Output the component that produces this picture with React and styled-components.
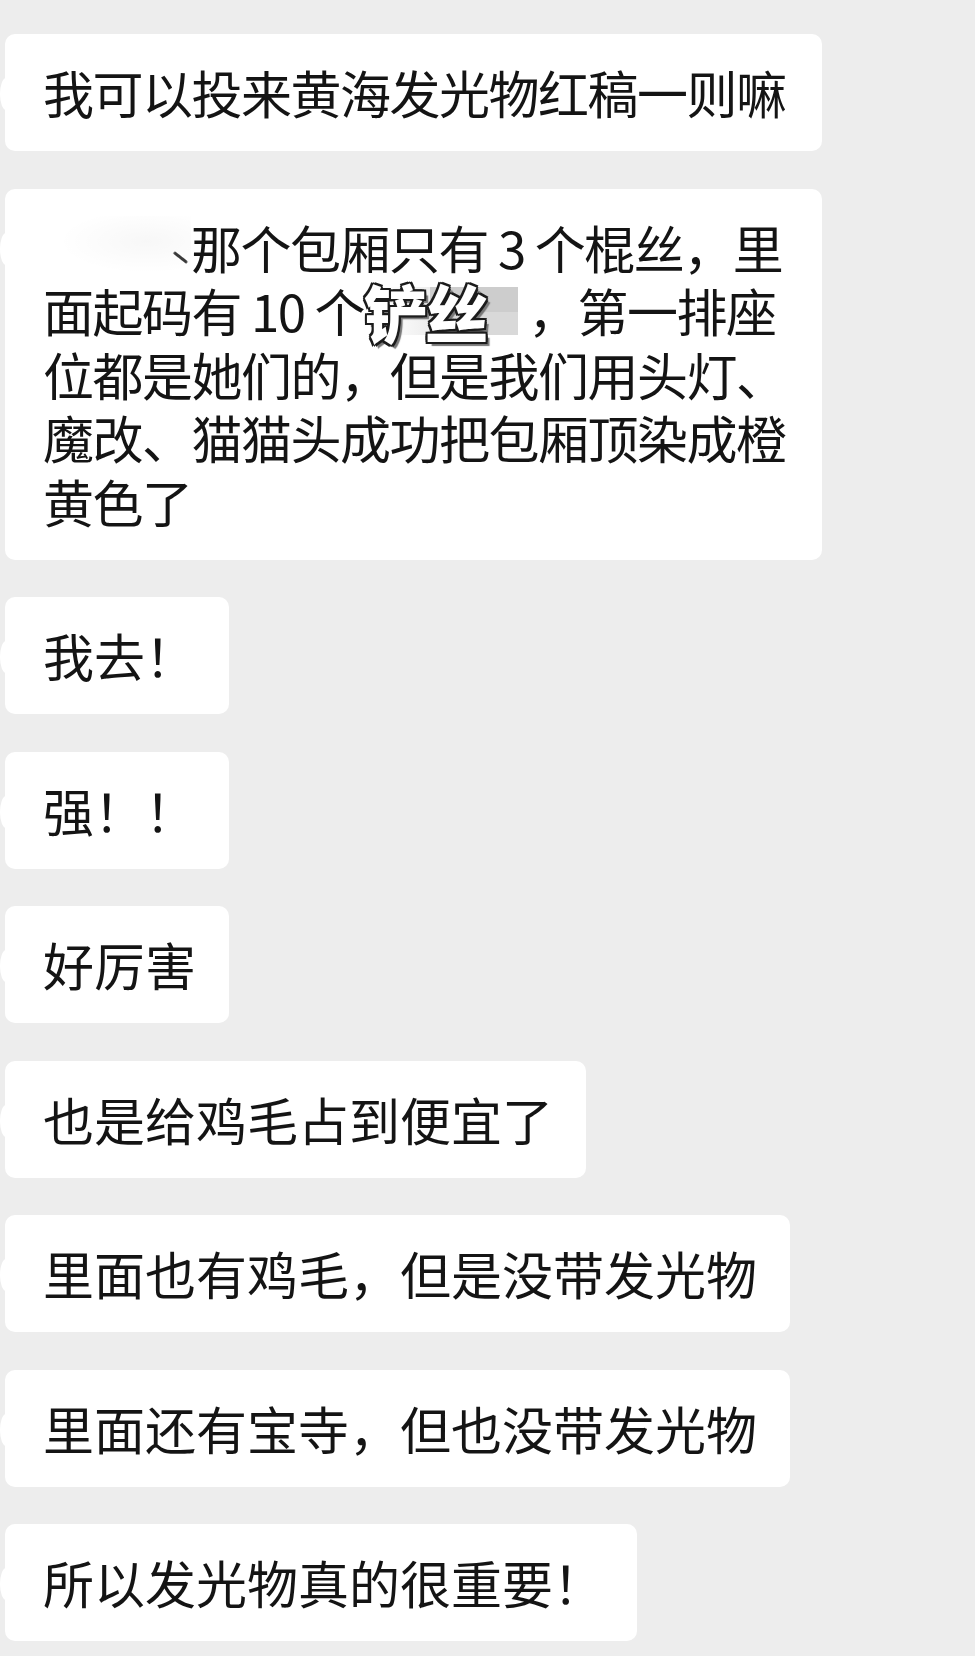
import React from "react";
import styled, { createGlobalStyle } from "styled-components";

const GlobalStyle = createGlobalStyle`
  html, body {
    margin: 0;
    padding: 0;
    background: #ededed;
  }
`;

const ChatWrapper = styled.div`
  width: 975px;
  min-height: 1656px;
  box-sizing: border-box;
  padding: 34px 0 0 5px;
  background: #ededed;

  display: flex;
  flex-direction: column;
  align-items: flex-start;
  gap: 37.5px;
`;

const Bubble = styled.div`
  position: relative;
  box-sizing: border-box;
  width: ${(p) => (p.$wide ? "817px" : "auto")};
  padding: 27px 33px 26.5px 38px;
  background: #fff;
  border-radius: 10px;

  font-family: "Noto Sans CJK SC", "Noto Sans", sans-serif;
  font-size: 51px;
  line-height: 63.5px;
  letter-spacing: ${(p) => (p.$wide ? "-1.5px" : "0")};
  color: #141414;
  white-space: nowrap;

  &::before {
    content: "";
    position: absolute;
    left: -5px;
    top: 44px;
    width: 12px;
    height: 32px;
    border-radius: 50%;
    background: #fff;
  }
`;

const Line = styled.div`
  display: block;
  height: 63.5px;
`;

/* blurred-out name at the start of the long message */
const Redacted = styled.span`
  position: relative;
  display: inline-block;
  width: 148px;
  height: 63.5px;
  vertical-align: top;
  background: radial-gradient(ellipse at 70% 40%, rgba(0, 0, 0, 0.03), rgba(0, 0, 0, 0) 60%);

  &::after {
    content: "";
    position: absolute;
    left: 129px;
    top: 40px;
    width: 17px;
    height: 3px;
    border-radius: 2px;
    background: #3a3a3a;
    transform: rotate(38deg);
    filter: blur(0.4px);
  }
`;

const Sticker = styled.span`
  display: inline-flex;
  align-items: center;
  width: 164px;
  height: 63.5px;
  vertical-align: top;
  background:
    linear-gradient(180deg, #cdcdcd 0 52%, #d9d9d9 52% 100%) right 10px center / 88px 48px no-repeat,
    linear-gradient(90deg, rgba(230, 230, 230, 0) 0, #e6e6e6 100%) left 20px center / 66px 48px no-repeat;
`;

const StickerText = styled.span`
  font-family: "Noto Sans CJK SC", sans-serif;
  font-size: 63px;
  font-weight: 900;
  line-height: 63.5px;
  letter-spacing: -2px;
  color: #fff;
  text-shadow:
    -2px 0 #1c1c1c, 2px 0 #1c1c1c, 0 -2px #1c1c1c, 0 2px #1c1c1c,
    -2px -2px #1c1c1c, 2px 2px #1c1c1c, -2px 2px #1c1c1c, 2px -2px #1c1c1c,
    4px 4px 1px #777;
`;

const messages = [
  "我去！",
  "强！！",
  "好厉害",
  "也是给鸡毛占到便宜了",
  "里面也有鸡毛，但是没带发光物",
  "里面还有宝寺，但也没带发光物",
  "所以发光物真的很重要！",
];

const App = () => {
  return (
    <>
      <GlobalStyle />
      <ChatWrapper>
        <Bubble $wide>我可以投来黄海发光物红稿一则嘛</Bubble>
        <Bubble $wide>
          <Line>
            <Redacted />那个包厢只有 3 个棍丝，里
          </Line>
          <Line>
            面起码有 10 个
            <Sticker>
              <StickerText>铲丝</StickerText>
            </Sticker>
            ，第一排座
          </Line>
          <Line>位都是她们的，但是我们用头灯、</Line>
          <Line>魔改、猫猫头成功把包厢顶染成橙</Line>
          <Line>黄色了</Line>
        </Bubble>
        {messages.map((m, i) => (
          <Bubble key={i}>{m}</Bubble>
        ))}
      </ChatWrapper>
    </>
  );
};

export default App;
